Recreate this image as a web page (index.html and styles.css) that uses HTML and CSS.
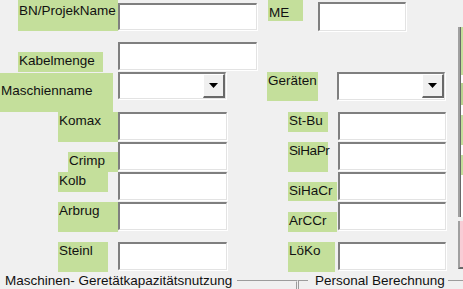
FILE: index.html
```html
<!DOCTYPE html>
<html lang="de">
<head>
    <meta charset="UTF-8">
    <meta name="viewport" content="width=device-width, initial-scale=1.0">
    <title>Kapazitätsnutzung</title>
    <link rel="stylesheet" href="styles.css">
</head>
<body>
    <div class="screen">
        <div class="main">
            <div class="form">
                <!-- Kopfzeile -->
                <div class="row row-head">
                    <div class="lbl lbl-bn">BN/ProjekName</div>
                    <div class="box box-bn"></div>
                    <div class="lbl lbl-me">ME</div>
                    <div class="box box-me"></div>
                </div>

                <div class="row row-kabel">
                    <div class="lbl lbl-kabel">Kabelmenge</div>
                    <div class="box box-kabel"></div>
                </div>

                <div class="row row-combo">
                    <div class="lbl lbl-masch">Maschienname</div>
                    <div class="combo combo-masch">
                        <span class="drop"><svg width="9" height="5" viewBox="0 0 9 5"><polygon points="0,0 9,0 4.5,5" fill="#000"/></svg></span>
                    </div>
                    <div class="lbl lbl-geraet">Geräten</div>
                    <div class="combo combo-geraet">
                        <span class="drop"><svg width="9" height="5" viewBox="0 0 9 5"><polygon points="0,0 9,0 4.5,5" fill="#000"/></svg></span>
                    </div>
                </div>

                <!-- Maschinen / Geräte -->
                <div class="pair">
                    <div class="cell cell-left">
                        <div class="slot"><div class="lbl lbl-komax">Komax</div></div>
                        <div class="box"></div>
                    </div>
                    <div class="cell cell-right">
                        <div class="slot"><div class="lbl lbl-stbu">St-Bu</div></div>
                        <div class="box"></div>
                    </div>
                </div>
                <div class="pair">
                    <div class="cell cell-left">
                        <div class="slot"><div class="lbl lbl-crimp">Crimp</div></div>
                        <div class="box"></div>
                    </div>
                    <div class="cell cell-right">
                        <div class="slot"><div class="lbl lbl-sihapr">SiHaPr</div></div>
                        <div class="box"></div>
                    </div>
                </div>
                <div class="pair">
                    <div class="cell cell-left">
                        <div class="slot"><div class="lbl lbl-kolb">Kolb</div></div>
                        <div class="box"></div>
                    </div>
                    <div class="cell cell-right">
                        <div class="slot"><div class="lbl lbl-sihacr">SiHaCr</div></div>
                        <div class="box"></div>
                    </div>
                </div>
                <div class="pair">
                    <div class="cell cell-left">
                        <div class="slot"><div class="lbl lbl-arbrug">Arbrug</div></div>
                        <div class="box"></div>
                    </div>
                    <div class="cell cell-right">
                        <div class="slot"><div class="lbl lbl-arccr">ArCCr</div></div>
                        <div class="box"></div>
                    </div>
                </div>
                <div class="pair pair-last">
                    <div class="cell cell-left">
                        <div class="slot"><div class="lbl lbl-steinl">Steinl</div></div>
                        <div class="box"></div>
                    </div>
                    <div class="cell cell-right">
                        <div class="slot"><div class="lbl lbl-loko">LöKo</div></div>
                        <div class="box"></div>
                    </div>
                </div>
            </div>

            <!-- rechter Rand: angeschnittene Liste -->
            <div class="side">
                <div class="side-list">
                    <div class="strip strip-1"></div>
                    <div class="strip strip-2"></div>
                    <div class="strip strip-3"></div>
                    <div class="strip strip-4"></div>
                </div>
                <div class="side-pink"></div>
            </div>
        </div>

        <div class="groups">
            <fieldset class="group group-masch"><legend>Maschinen- Geretätkapazitätsnutzung</legend></fieldset>
            <fieldset class="group group-personal"><legend>Personal Berechnung</legend></fieldset>
        </div>
    </div>
</body>
</html>
```

FILE: styles.css
```css
/* Reset */
* {
    margin: 0;
    padding: 0;
    box-sizing: border-box;
}

body {
    font-family: 'Liberation Sans', Arial, sans-serif;
    font-size: 13.5px;
    color: #111;
    background-color: #f0f0f0;
    width: 463px;
    height: 289px;
    overflow: hidden;
}

.screen {
    width: 463px;
    height: 289px;
    overflow: hidden;
}

.main {
    display: flex;
    height: 273px;
}

.form {
    width: 458px;
    flex: none;
}

/* Labels with green background */
.lbl {
    background: #c4df9b;
    line-height: 16px;
    padding: 1px 0 0 1px;
    white-space: nowrap;
    flex: none;
}

/* Sunken text boxes */
.box, .combo {
    background: #fff;
    border-style: solid;
    border-width: 2px 1px 1px 2px;
    border-color: #7f7f7f #e3e3e3 #e3e3e3 #7f7f7f;
    box-shadow: 1px 1px 0 #fff;
    flex: none;
}

.combo {
    display: flex;
    justify-content: flex-end;
}

.drop {
    width: 22px;
    height: 24px;
    background: #f0f0f0;
    border-style: solid;
    border-width: 1px 2px 2px 1px;
    border-color: #fff #696969 #696969 #fff;
    display: flex;
    align-items: center;
    justify-content: center;
}

.drop svg {
    display: block;
}

/* Top rows */
.row {
    display: flex;
    align-items: flex-start;
}

.row-head {
    height: 42px;
}

.lbl-bn {
    margin-left: 18px;
    width: 100px;
    height: 31px;
    padding-top: 3px;
}

.box-bn {
    margin-top: 3px;
    width: 139px;
    height: 27px;
}

.lbl-me {
    margin-left: 11px;
    width: 35px;
    height: 21px;
    padding-top: 5px;
}

.box-me {
    margin-left: 15px;
    margin-top: 2px;
    width: 88px;
    height: 29px;
}

.row-kabel {
    height: 30px;
}

.lbl-kabel {
    margin-left: 18px;
    margin-top: 10px;
    width: 85px;
    height: 20px;
}

.box-kabel {
    margin-left: 15px;
    width: 139px;
    height: 28px;
}

.row-combo {
    height: 40px;
}

.lbl-masch {
    margin-top: 1px;
    width: 113px;
    height: 39px;
    padding-top: 10px;
}

.combo-masch {
    margin-left: 5px;
    width: 108px;
    height: 27px;
}

.lbl-geraet {
    margin-left: 41px;
    width: 51px;
    height: 29px;
}

.combo-geraet {
    margin-left: 19px;
    width: 108px;
    height: 28px;
}

/* Two column rows */
.pair {
    display: flex;
    height: 30px;
}

.pair-last {
    margin-top: 10px;
}

.cell {
    display: flex;
    align-items: flex-start;
}

.cell-left {
    margin-left: 58px;
}

.cell-left .slot {
    width: 60px;
}

.cell-left .box {
    width: 109px;
    height: 28px;
}

.cell-right {
    margin-left: 61px;
}

.cell-right .slot {
    width: 50px;
}

.cell-right .box {
    width: 108px;
    height: 28px;
}

.slot {
    flex: none;
    height: 30px;
}

.lbl-komax, .lbl-arbrug {
    width: 60px;
    height: 30px;
}

.lbl-crimp {
    margin-left: 10px;
    margin-top: 10px;
    width: 50px;
    height: 20px;
}

.lbl-kolb {
    width: 50px;
    height: 20px;
}

.lbl-steinl {
    width: 50px;
    height: 30px;
}

.lbl-stbu {
    width: 40px;
    height: 20px;
}

.lbl-sihapr {
    width: 40px;
    height: 30px;
    letter-spacing: -0.4px;
}

.lbl-sihacr {
    margin-top: 10px;
    width: 49px;
    height: 19px;
}

.lbl-arccr {
    margin-top: 10px;
    width: 49px;
    height: 20px;
}

.lbl-loko {
    width: 47px;
    height: 30px;
}

/* Cut-off panel on the right */
.side {
    width: 5px;
    flex: none;
}

.side-list {
    height: 190px;
    background: #fff;
    border-left: 2px solid #a0a0a0;
    box-shadow: inset 1px 0 0 #696969;
    padding-left: 1px;
}

.strip {
    background: #c4df9b;
}

.strip-1 {
    margin-top: 27px;
    height: 48px;
}

.strip-2 {
    margin-top: 8px;
    height: 22px;
    background: #b9d38f;
}

.strip-3 {
    margin-top: 10px;
    height: 30px;
}

.strip-4 {
    margin-top: 10px;
    height: 20px;
}

.side-pink {
    margin-top: 4px;
    height: 48px;
    background: #f8cdd6;
    border-left: 2px solid #a0a0a0;
    border-bottom: 2px solid #696969;
}

/* Group boxes at the bottom */
.groups {
    display: flex;
    height: 40px;
}

.group {
    flex: none;
    min-width: 0;
    height: 40px;
    border: 2px groove #f0f0f0;
}

.group legend {
    line-height: 16px;
    white-space: nowrap;
}

.group-masch {
    margin-left: -8px;
    width: 306px;
    padding-left: 6px;
}

.group-masch legend {
    padding: 0 5px 0 5px;
}

.group-personal {
    margin-left: 0;
    width: 200px;
    padding-left: 8px;
}

.group-personal legend {
    padding: 0 3px 0 7px;
}
```
